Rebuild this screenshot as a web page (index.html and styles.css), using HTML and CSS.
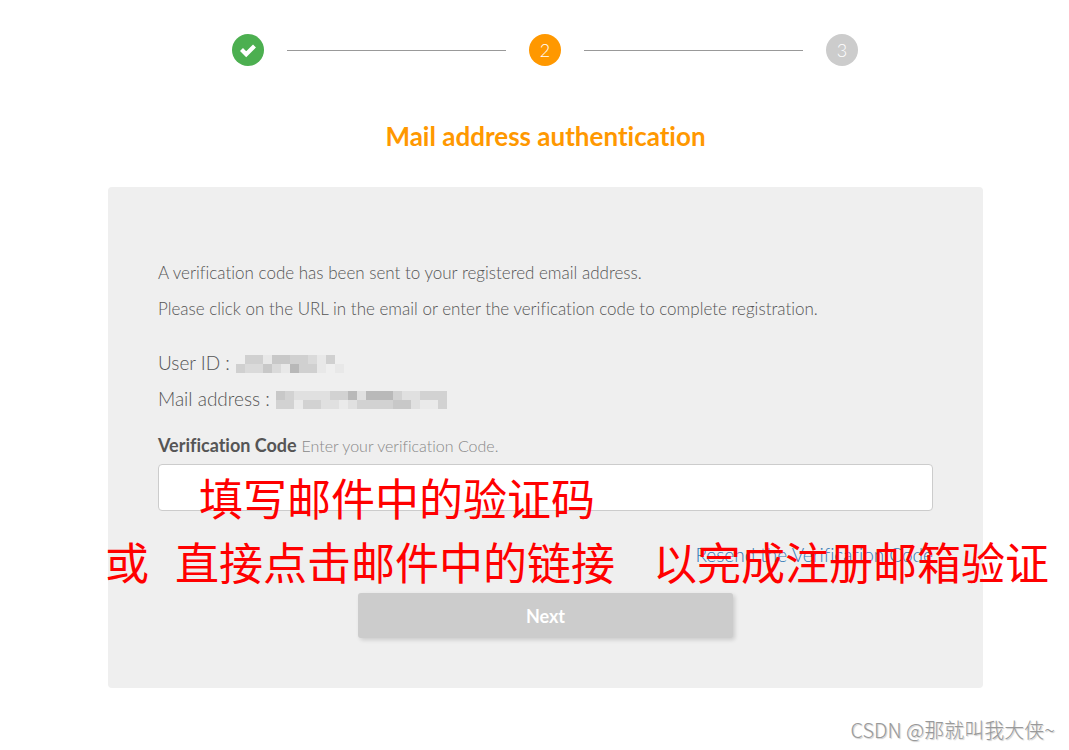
FILE: index.html
```html
<!DOCTYPE html>
<html lang="en">
<head>
    <meta charset="UTF-8">
    <meta name="viewport" content="width=device-width, initial-scale=1.0">
    <title>Mail address authentication</title>
    <link rel="stylesheet" href="styles.css">
</head>
<body>
    <main class="container">
        <ol class="steps">
            <li class="step step-done">
                <svg width="32" height="32" viewBox="0 0 32 32" aria-label="Step 1 complete">
                    <path d="M9.5 15.5l4.7 4.7 8.3-8.3" fill="none" stroke="#fff" stroke-width="4.2"/>
                </svg>
            </li>
            <li class="step-line"></li>
            <li class="step step-current">2</li>
            <li class="step-line"></li>
            <li class="step">3</li>
        </ol>

        <h1>Mail address authentication</h1>

        <form class="card">
            <div class="intro">
                <p>A verification code has been sent to your registered email address.</p>
                <p>Please click on the URL in the email or enter the verification code to complete registration.</p>
            </div>

            <div class="account">
                <p>User ID :
                    <svg class="mosaic" width="108" height="18" viewBox="0 0 12 2" shape-rendering="crispEdges" aria-hidden="true">
                        <path fill="#d0d0d0" d="M1 0h2v1h-2zM6 0h2v1h-2zM10 0h1v1h-1zM0 1h1v1h-1zM7 1h2v1h-2z"/>
                        <path fill="#c8c8c8" d="M4 0h2v1h-2zM3 1h1v1h-1z"/>
                        <path fill="#dadada" d="M8 0h1v1h-1zM1 1h2v1h-2zM4 1h1v1h-1z"/>
                        <path fill="#e8e8e8" d="M3 0h1v1h-1zM9 0h1v1h-1zM5 1h1v1h-1zM9 1h1v1h-1zM11 1h1v1h-1z"/>
                        <path fill="#b8b8b8" d="M6 1h1v1h-1z"/>
                    </svg>
                </p>
                <p>Mail address :
                    <svg class="mosaic" width="171" height="18" viewBox="0 0 19 2" shape-rendering="crispEdges" aria-hidden="true">
                        <path fill="#e0e0e0" d="M2 0h4v1h-4zM9 0h1v1h-1zM14 0h2v1h-2zM5 1h2v1h-2zM8 1h1v1h-1zM15 1h1v1h-1z"/>
                        <path fill="#d2d2d2" d="M1 0h1v1h-1zM6 0h2v1h-2zM13 0h1v1h-1zM16 0h3v1h-3zM0 1h2v1h-2zM3 1h2v1h-2zM9 1h4v1h-4zM18 1h1v1h-1z"/>
                        <path fill="#c8c8c8" d="M0 0h1v1h-1zM13 1h2v1h-2z"/>
                        <path fill="#b9b9b9" d="M8 0h1v1h-1zM10 0h3v1h-3z"/>
                        <path fill="#eaeaea" d="M2 1h1v1h-1zM7 1h1v1h-1zM16 1h2v1h-2z"/>
                    </svg>
                </p>
            </div>

            <div class="field">
                <div class="field-label">
                    <label for="code">Verification Code</label>
                    <small id="code-hint">Enter your verification Code.</small>
                </div>
                <input type="text" id="code" name="code" aria-describedby="code-hint">
                <p class="note note-input">填写邮件中的验证码</p>
            </div>

            <div class="resend">
                <a href="#resend">Resend the Verification Code</a>
                <p class="note note-resend"><span>或</span><span>直接点击邮件中的链接</span><span>以完成注册邮箱验证</span></p>
            </div>

            <button type="submit">Next</button>
        </form>
    </main>
    <p class="watermark">CSDN @那就叫我大侠~</p>
</body>
</html>
```

FILE: styles.css
```css
/* Reset and base styles */
* {
    margin: 0;
    padding: 0;
    box-sizing: border-box;
}

body {
    position: relative;
    font-family: Lato, "Noto Sans CJK SC", sans-serif;
    font-weight: 300;
    font-variant-ligatures: none;
    color: #555;
    background: #fff;
}

/* Layout */
.container {
    padding: 34px 86px 62px 108px;
}

/* Steps */
.steps {
    display: flex;
    align-items: center;
    gap: 23px;
    padding: 0 125px 0 124px;
    list-style: none;
}

.step {
    width: 32px;
    height: 32px;
    border-radius: 50%;
    background: #ccc;
    color: #fff;
    font-size: 18px;
    line-height: 32px;
    text-align: center;
}

.step svg {
    display: block;
}

.step-done {
    background: #4caf50;
}

.step-current {
    background: #ff9800;
}

.step-line {
    flex: 1;
    height: 1px;
    background: #999;
}

h1 {
    margin: 50px 0 31px;
    color: #ff9800;
    font-size: 26px;
    font-weight: 700;
    line-height: 40px;
    text-align: center;
}

/* Card */
.card {
    padding: 68px 50px 50px;
    border-radius: 4px;
    background: #efefef;
    font-size: 19px;
    line-height: 36px;
}

.intro {
    margin-bottom: 18px;
    font-size: 17px;
}

.mosaic {
    margin-left: 1px;
    vertical-align: -3px;
}

/* Verification code */
.field {
    position: relative;
    margin-top: 16px;
}

.field-label {
    margin-bottom: 6px;
    font-size: 18px;
    line-height: 24px;
}

label {
    font-weight: 700;
}

small {
    color: #888;
    font-size: 16px;
}

input {
    display: block;
    width: 100%;
    height: 47px;
    padding: 0 12px;
    border: 1px solid #ccc;
    border-radius: 4px;
    background: #fff;
    font: inherit;
}

.resend {
    position: relative;
    margin: 26px 0 20px;
    text-align: right;
}

a {
    color: #337ab7;
    text-decoration: none;
}

button {
    display: block;
    width: 375px;
    max-width: 100%;
    height: 45px;
    margin: 0 auto;
    border: none;
    border-radius: 3px;
    background: #ccc;
    box-shadow: 2px 2px 4px rgba(0, 0, 0, 0.15);
    color: #fff;
    font-family: inherit;
    font-size: 18px;
    font-weight: 700;
    cursor: pointer;
}

/* Notes written over the form */
.note {
    position: absolute;
    color: #f00;
    font-family: "Noto Sans CJK SC", sans-serif;
    font-size: 44px;
    font-weight: 400;
    line-height: 64px;
    white-space: nowrap;
    pointer-events: none;
}

.note-input {
    top: 32px;
    left: 41px;
}

.note-resend {
    display: flex;
    top: -8px;
    left: -53px;
}

.note-resend span {
    margin-right: 26px;
}

.note-resend span:last-child {
    margin-left: 12px;
    margin-right: 0;
}

.watermark {
    position: absolute;
    right: 14px;
    bottom: 6px;
    color: #999;
    font-family: "Noto Sans CJK SC", sans-serif;
    font-size: 20px;
    line-height: 28px;
    text-shadow: 1px 1px 1px #ccc;
}
```
